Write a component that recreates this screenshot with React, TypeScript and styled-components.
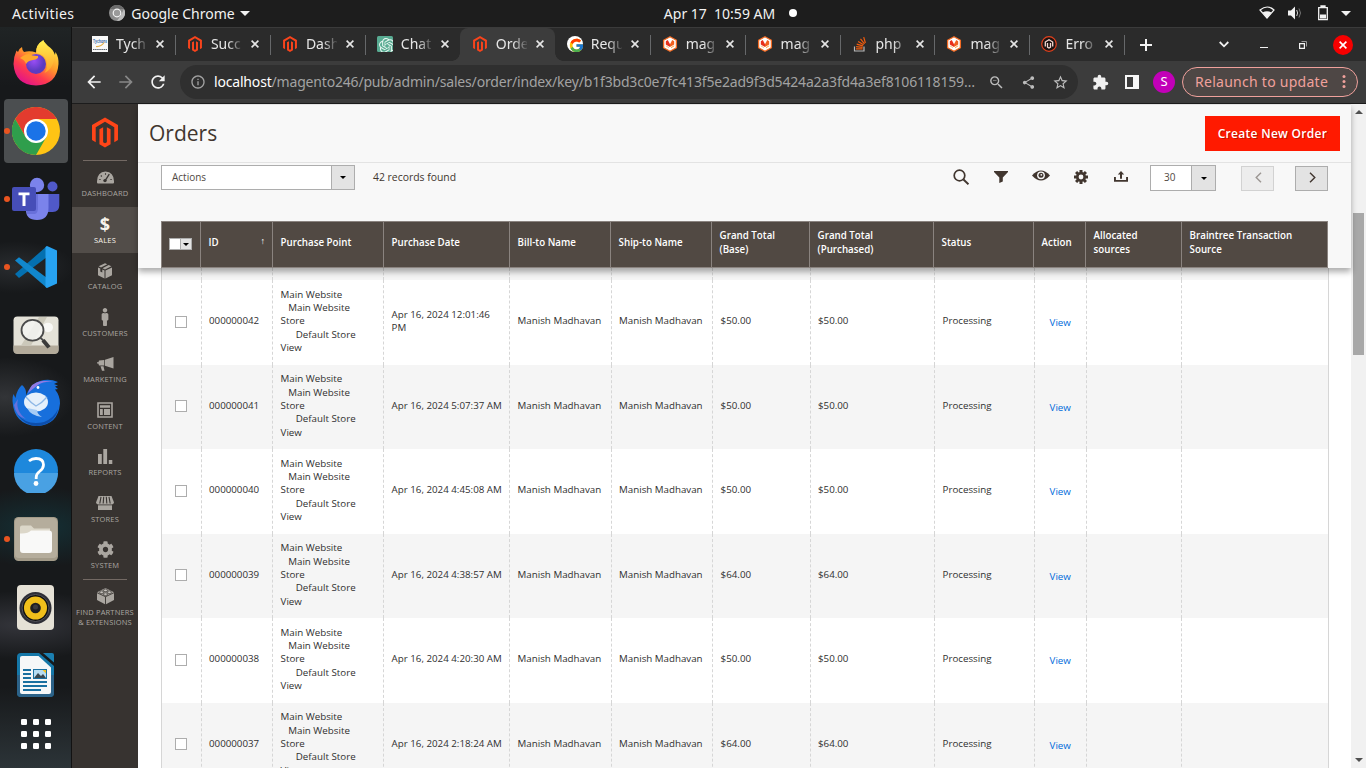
import React from 'react';
import styled, { createGlobalStyle, css } from 'styled-components';
import { FcGoogle } from 'react-icons/fc';
import { SiOpenai } from 'react-icons/si';
import { FaMale, FaCog } from 'react-icons/fa';
import {
  MdArrowBack,
  MdArrowForward,
  MdRefresh,
  MdInfoOutline,
  MdZoomOut,
  MdShare,
  MdStarBorder,
  MdExtension,
} from 'react-icons/md';

const Global = createGlobalStyle`
  * { box-sizing: border-box; }
  html, body { margin: 0; padding: 0; overflow: hidden; }
  svg { display: block; flex: none; }
`;

const uiFont = `"Noto Sans", "Open Sans", sans-serif`;

const Desktop = styled.div`
  width: 1366px;
  height: 768px;
  display: flex;
  flex-direction: column;
  overflow: hidden;
  background: #1d1d1d;
  font-family: ${uiFont};
`;

/* ---------- system bar ---------- */

const SystemBar = styled.header`
  height: 27px;
  flex: none;
  display: grid;
  grid-template-columns: 1fr auto 1fr;
  align-items: center;
  padding: 0 15px 1px 12px;
  background: #1d1d1d;
  color: #f2f2f2;
  font-size: 14px;
  white-space: pre;
`;

const SystemGroup = styled.div<{ $end?: boolean }>`
  display: flex;
  align-items: center;
  justify-content: ${(p) => (p.$end ? 'flex-end' : 'flex-start')};
`;

const SystemText = styled.span<{ $spacing?: number }>`
  letter-spacing: ${(p) => p.$spacing ?? 0}px;
`;

const ChromeMark = styled.span`
  display: flex;
  margin: 0 6px 0 35px;
`;

const Caret = styled.span`
  margin-left: 5px;
  border: 5px solid transparent;
  border-top-color: #f2f2f2;
  border-bottom: 0;
`;

const Clock = styled.div`
  display: flex;
  align-items: center;
  padding-left: 98px;
`;

const NoticeDot = styled.i`
  width: 8px;
  height: 8px;
  border-radius: 50%;
  margin-left: 14px;
  background: #fff;
`;

const Body = styled.div`
  flex: 1;
  display: flex;
  min-height: 0;
`;

/* ---------- dock ---------- */

const Dock = styled.nav`
  width: 72px;
  flex: none;
  display: flex;
  flex-direction: column;
  padding-top: 2px;
  border-right: 1px solid #121212;
  background:
    radial-gradient(ellipse 60px 26px at 15px 240px, rgba(60, 64, 68, 0.5), transparent),
    radial-gradient(ellipse 70px 40px at 5px 370px, rgba(78, 80, 84, 0.5), transparent),
    radial-gradient(ellipse 90px 40px at 40px 500px, rgba(18, 66, 74, 0.55), transparent),
    radial-gradient(ellipse 110px 34px at 20px 598px, rgba(80, 80, 90, 0.5), transparent),
    linear-gradient(#202425 0, #17191b 60px, #17191b 660px, #2c3438 741px);
`;

const DockCell = styled.div<{ $short?: boolean }>`
  height: ${(p) => (p.$short ? 50 : 68)}px;
  flex: none;
  display: flex;
  align-items: center;
  justify-content: center;
  position: relative;
`;

const DockTile = styled.div<{ $active?: boolean }>`
  width: 64px;
  height: 64px;
  border-radius: 4px;
  display: flex;
  align-items: center;
  justify-content: center;
  background: ${(p) => (p.$active ? '#4b4e50' : 'transparent')};
`;

const RunningDot = styled.i`
  position: absolute;
  left: 4px;
  top: 31px;
  width: 6px;
  height: 6px;
  border-radius: 50%;
  background: #e95420;
`;

/* ---------- browser ---------- */

const Browser = styled.section`
  flex: 1;
  min-width: 0;
  display: flex;
  flex-direction: column;
`;

const TabStrip = styled.div`
  height: 34px;
  flex: none;
  display: flex;
  padding-left: 8px;
  background: #2b2b2b;
  border-top: 1px solid #3b3b3b;
  color: #e6e6e6;
`;

const Tab = styled.div<{ $active?: boolean; $divider?: boolean }>`
  position: relative;
  width: 94.95px;
  flex: none;
  display: flex;
  align-items: center;
  padding-left: 12px;
  padding-bottom: 1px;
  ${(p) =>
    p.$divider &&
    css`
      &::after {
        content: '';
        position: absolute;
        right: -1px;
        top: 7px;
        width: 1px;
        height: 20px;
        background: #66686a;
      }
    `}
  ${(p) =>
    p.$active &&
    css`
      background: #3c3c3c;
      border-radius: 8px 8px 0 0;
      &::before,
      &::after {
        content: '';
        position: absolute;
        bottom: 0;
        width: 8px;
        height: 8px;
      }
      &::before {
        left: -8px;
        background: radial-gradient(circle at 0 0, #2b2b2b 7.5px, #3c3c3c 8px);
      }
      &::after {
        right: -8px;
        background: radial-gradient(circle at 100% 0, #2b2b2b 7.5px, #3c3c3c 8px);
      }
    `}
`;

const TabTitle = styled.span`
  width: 31px;
  margin: 0 9px 0 8px;
  white-space: pre;
  font-size: 14px;
  line-height: 20px;
  -webkit-mask-image: linear-gradient(90deg, #000 55%, transparent 105%);
  mask-image: linear-gradient(90deg, #000 55%, transparent 105%);
`;

const WindowControls = styled.div`
  margin-left: auto;
  display: flex;
  align-items: center;
  padding-right: 13px;
`;

const ControlSlot = styled.span<{ $w: number }>`
  width: ${(p) => p.$w}px;
  display: flex;
  align-items: center;
  justify-content: center;
`;

const CloseWindow = styled.span`
  width: 20px;
  height: 20px;
  border-radius: 50%;
  background: #f70000;
  display: flex;
  align-items: center;
  justify-content: center;
  color: #fff;
`;

const AddressBar = styled.div`
  height: 43px;
  flex: none;
  display: flex;
  align-items: center;
  background: #3c3c3c;
  border-bottom: 1px solid #1c1c1c;
  padding: 0 8px 0 12px;
  color: #f1f1f1;
`;

const NavIcon = styled.span<{ $dim?: boolean }>`
  display: flex;
  width: 20px;
  margin-right: 12px;
  color: ${(p) => (p.$dim ? '#888' : '#f1f1f1')};
`;

const Omnibox = styled.div`
  width: 898px;
  flex: none;
  height: 34px;
  border-radius: 17px;
  background: #2f2f2f;
  display: flex;
  align-items: center;
  padding: 0 9px 0 10px;
  color: #a2a2a2;
`;

const Url = styled.span`
  flex: 1;
  margin: 0 0 2px 8px;
  font-size: 14px;
  letter-spacing: -0.18px;
  white-space: nowrap;
  b {
    font-weight: 400;
    color: #fff;
  }
`;

const OmniIcons = styled.span`
  display: flex;
  align-items: center;
  gap: 16px;
  color: #bdbdbd;
`;

const SidePanelMark = styled.svg`
  margin-left: 3px;
`;

const Avatar = styled.span`
  width: 22px;
  height: 22px;
  flex: none;
  border-radius: 50%;
  background: #c200b8;
  color: #fff;
  font-size: 13px;
  line-height: 21px;
  text-align: center;
  margin: 0 7px 0 14px;
`;

const Relaunch = styled.div`
  width: 176px;
  height: 30px;
  flex: none;
  border: 1px solid #f0a19c;
  border-radius: 15px;
  background: #4e4745;
  color: #f0a19c;
  display: flex;
  align-items: center;
  justify-content: space-between;
  padding: 0 11px 1px 12px;
  font-size: 14px;
  letter-spacing: 0.27px;
  white-space: nowrap;
`;

/* ---------- admin page ---------- */

const Viewport = styled.div`
  flex: 1;
  min-height: 0;
  display: flex;
  font-family: 'Open Sans', 'Noto Sans', sans-serif;
  background: #fff;
`;

const SideMenu = styled.aside`
  width: 66px;
  flex: none;
  background: #373330;
  display: flex;
  flex-direction: column;
  align-items: center;
`;

const SideLogo = styled.div`
  padding: 13px 0 12px;
`;

const SideRule = styled.hr`
  width: 44px;
  height: 1px;
  margin: 0 0 -0.6px;
  border: 0;
  background: #736963;
  flex: none;
`;

const SideItem = styled.a<{ $active?: boolean; $h?: number }>`
  width: 66px;
  height: ${(p) => p.$h ?? 46.5}px;
  flex: none;
  display: flex;
  flex-direction: column;
  align-items: center;
  padding-top: 7.6px;
  color: ${(p) => (p.$active ? '#f7f3eb' : '#aaa6a0')};
  background: ${(p) => (p.$active ? '#524d49' : 'transparent')};
`;

const SideIcon = styled.span`
  height: 19px;
  display: flex;
  align-items: center;
  justify-content: center;
`;

const SideLabel = styled.span`
  margin-top: 1px;
  font-size: 7.5px;
  line-height: 10px;
  letter-spacing: 0.17px;
  text-align: center;
  white-space: pre;
`;

const Dollar = styled.b`
  font: 700 18px/18px 'Open Sans', sans-serif;
`;

const Page = styled.main`
  flex: 1;
  min-width: 0;
  display: flex;
  flex-direction: column;
  color: #41362f;
`;

const Sticky = styled.div`
  height: 164px;
  flex: none;
  display: flex;
  flex-direction: column;
  background: #f8f8f8;
  box-shadow: 0 4px 6px rgba(0, 0, 0, 0.32);
  z-index: 1;
`;

const TitleBar = styled.div`
  height: 59px;
  flex: none;
  display: flex;
  align-items: center;
  justify-content: space-between;
  padding: 0 11px;
  border-top: 1px solid #e3e3e3;
  border-bottom: 1px solid #e3e3e3;
`;

const Title = styled.h1`
  margin: 0 0 2px;
  font-size: 21px;
  font-weight: 400;
`;

const PrimaryButton = styled.button`
  width: 135px;
  height: 35px;
  border: 0;
  border-radius: 0;
  padding: 0;
  background: #ff1a00;
  color: #fff;
  font: 600 12px 'Open Sans', sans-serif;
  letter-spacing: 0.3px;
  text-shadow: 1px 1px 0 rgba(0, 0, 0, 0.25);
`;

const Toolbar = styled.div`
  height: 58px;
  flex: none;
  display: flex;
  align-items: flex-start;
  padding: 2px 23px 0;
`;

const Select = styled.div<{ $w: number; $h: number; $pad: number }>`
  width: ${(p) => p.$w}px;
  height: ${(p) => p.$h}px;
  display: flex;
  border: 1px solid #adadad;
  background: #fff;
  color: #514943;
  font-size: 10px;
  line-height: ${(p) => p.$h - 3}px;
  padding-left: ${(p) => p.$pad}px;
`;

const SelectArrow = styled.span<{ $w: number }>`
  width: ${(p) => p.$w}px;
  margin-left: auto;
  border-left: 1px solid #adadad;
  background: #e3e3e3;
  display: flex;
  align-items: center;
  justify-content: center;
`;

const BlackCaret = styled.i`
  border: 3px solid transparent;
  border-top-color: #000;
  border-bottom: 0;
`;

const Records = styled.span`
  margin-left: 18px;
  line-height: 24px;
  font-size: 10.4px;
`;

const ToolIcons = styled.div`
  height: 23px;
  margin-left: auto;
  display: grid;
  grid-template-columns: repeat(5, 40px);
  align-items: center;
  justify-items: center;
  margin-right: 9px;
  color: #41362f;
`;

const PageButton = styled.button<{ $disabled?: boolean; $ml: number }>`
  width: 33px;
  height: 25px;
  margin: 1px 0 0 ${(p) => p.$ml}px;
  padding: 0 0 2px 2px;
  border: 1px solid #adadad;
  background: #e3e3e3;
  opacity: ${(p) => (p.$disabled ? 0.5 : 1)};
  display: flex;
  align-items: center;
  justify-content: center;
`;

const HeadRow = styled.div`
  height: 47px;
  width: 1167px;
  margin-left: 23px;
  flex: none;
  display: grid;
  grid-template-columns: 39px 72px 111px 126px 101px 101px 98px 124px 100px 52px 96px 147px;
  background: #514943;
  border: 1px solid #8a837f;
  border-width: 1px 1px 1px 0;
`;

const HeadCell = styled.div`
  display: flex;
  align-items: center;
  justify-content: space-between;
  border-left: 1px solid #8a837f;
  padding: 0 7px 3px 7.6px;
  color: #fff;
  font-size: 9.75px;
  font-weight: 600;
  line-height: 14px;
  white-space: pre;
  &:first-child {
    padding-left: 7px;
  }
`;

const SortArrow = styled.span`
  font-size: 9px;
  font-weight: 400;
  padding-bottom: 4px;
`;

const MassSelect = styled.span`
  width: 23px;
  height: 12px;
  margin-top: 2px;
  display: flex;
  border: 1px solid #adadad;
  background: #fff;
`;

const MassArrow = styled.span`
  width: 11px;
  margin-left: auto;
  border-left: 1px solid #adadad;
  background: #e3e3e3;
  display: flex;
  align-items: center;
  justify-content: center;
`;

const Rows = styled.div`
  flex: 1;
  min-height: 0;
  overflow: hidden;
  margin-left: 23px;
  width: 1168px;
`;

const Row = styled.div<{ $alt?: boolean; $h?: number }>`
  height: ${(p) => p.$h ?? 84.5}px;
  display: grid;
  grid-template-columns: 40px 71px 111px 126px 102px 101px 98px 124px 100px 52px 95px 148px;
  background: ${(p) => (p.$alt ? '#f5f5f5' : '#fff')};
`;

const Cell = styled.div<{ $link?: boolean; $center?: boolean; $near?: boolean }>`
  display: flex;
  align-items: center;
  justify-content: ${(p) => (p.$center ? 'center' : 'flex-start')};
  padding: ${(p) =>
    p.$link ? '1.2px 0 0 14.6px' : p.$center ? '0 2px 1.2px 0' : `0 7px 2.6px ${p.$near ? 7 : 7.6}px`};
  border-left: 1px dashed #d6d6d6;
  color: ${(p) => (p.$link ? '#006bdb' : '#303030')};
  font-size: 9.75px;
  line-height: 13.3px;
  white-space: pre;
  &:first-child {
    border-left-style: solid;
  }
  &:last-child {
    border-right: 1px solid #d6d6d6;
  }
`;

const Checkbox = styled.span`
  width: 12px;
  height: 12px;
  border: 1px solid #adadad;
  background: #fff;
`;

const ScrollTrack = styled.div`
  width: 15px;
  flex: none;
  display: flex;
  flex-direction: column;
  align-items: center;
  background: #f1f1f1;
  padding: 6px 0 6px;
`;

const ScrollArrow = styled.i<{ $down?: boolean }>`
  border: 4px solid transparent;
  ${(p) =>
    p.$down
      ? 'border-top-color: #505050; border-bottom: 0; margin-top: auto;'
      : 'border-bottom-color: #505050; border-top: 0;'}
`;

const ScrollThumb = styled.div`
  width: 11px;
  height: 142px;
  margin-top: 99px;
  background: #a8a8a8;
`;

/* ---------- drawings ---------- */

const MagentoMark = ({ w, h, color = '#f8441c' }: { w: number; h: number; color?: string }) => (
  <svg width={w} height={h} viewBox="1.6 0 20.8 24" fill={color}>
    <path d="M12 24l-4.455-2.572v-12l2.97-1.715v12.001l1.485.902 1.485-.902V7.713l2.971 1.715v12L12 24zM22.391 6v12l-2.969 1.714V7.713L12 3.43 4.574 7.713v12.001L1.609 18V6L12 0l10.391 6z" />
  </svg>
);

const CrossIcon = () => (
  <svg width="8" height="8" viewBox="0 0 8 8" fill="none" stroke="currentColor" strokeWidth="1.6">
    <path d="M.6.6l6.800 6.800M7.400.6L.6 7.400" />
  </svg>
);

const PlusIcon = () => (
  <svg width="12" height="12" viewBox="0 0 12 12" fill="#f4f4f4">
    <path d="M5 0h2v5h5v2H7v5H5V7H0V5h5z" />
  </svg>
);

const TycheIcon = () => (
  <svg width="16" height="16" viewBox="0 0 16 16">
    <rect width="16" height="16" fill="#f8f8f8" />
    <text x="1" y="6.5" fontSize="6" fontWeight="700" fontFamily="Open Sans, sans-serif" fill="#3f73ad" textLength="14" lengthAdjust="spacingAndGlyphs">Tychons</text>
    <path d="M4 10.500q5 .500 8-4" stroke="#e5b04b" strokeWidth="1.200" fill="none" />
    <path d="M1 13.500h14" stroke="#55606b" strokeWidth="1.200" strokeDasharray="1.500 .600" />
  </svg>
);

const ChatIcon = () => (
  <svg width="16" height="16" viewBox="0 0 16 16">
    <rect width="16" height="16" rx="1.500" fill="#58ab92" />
    <SiOpenai x="2" y="2" width="12" height="12" color="#e8f6f1" />
  </svg>
);

const GoogleIcon = () => (
  <svg width="16" height="16" viewBox="0 0 16 16">
    <circle cx="8" cy="8" r="8" fill="#fff" />
    <FcGoogle x="1.500" y="1.500" width="13" height="13" />
  </svg>
);

const MageplazaIcon = () => (
  <svg width="16" height="16" viewBox="0 0 16 16">
    <path d="M8 .700l6.400 3.500v7.600L8 15.300 1.600 11.800V4.200z" fill="#fff" stroke="#f26a22" strokeWidth="1.300" strokeLinejoin="round" />
    <path d="M3.800 5.200L5.800 4 8 8.300V11L3.800 8.500z" fill="#e8301c" />
    <path d="M12.200 5.200L10.200 4 8 8.300V11l4.200-2.500z" fill="#f2601f" />
    <path d="M9 12.300l3.200-2V9.200L9 11.200z" fill="#f9a13c" />
    <path d="M3.800 9.200v1.100l3.200 2v-1.100z" fill="#fbc27c" />
  </svg>
);

const StackIcon = () => (
  <svg width="16" height="16" viewBox="0 0 16 16" fill="none">
    <path d="M2.500 10.500v4.500h9.500v-4.500" stroke="#b9b9b9" strokeWidth="1.200" />
    <path d="M4 12.800h6.600M4.100 10.600l6.500.700M4.700 8.200l6.200 1.700M6.100 5.500l5.500 3.300M8.500 2.900l4 4.900M11.700 1.200l1.700 5.800" stroke="#f25c0d" strokeWidth="1.200" />
  </svg>
);

const ErrorMageIcon = () => (
  <svg width="16" height="16" viewBox="0 0 16 16">
    <circle cx="8" cy="8" r="7.300" fill="#1c1312" stroke="#e2401c" strokeWidth="1.200" />
    <path d="M4.300 10.600V6L8 3.800 11.700 6v4.600M6.500 7v4.200l1.500.900 1.500-.900V7" stroke="#f3d8d2" strokeWidth="1.300" fill="none" />
  </svg>
);

const FirefoxIcon = () => (
  <svg width="48" height="48" viewBox="0 0 48 48">
    <defs>
      <linearGradient id="ffBody" x1=".8" y1=".1" x2=".25" y2=".95">
        <stop offset="0" stopColor="#ffe544" />
        <stop offset=".4" stopColor="#ff9a2a" />
        <stop offset=".7" stopColor="#ff3c4d" />
        <stop offset="1" stopColor="#e31587" />
      </linearGradient>
      <linearGradient id="ffFlame" x1=".6" y1="0" x2=".6" y2="1">
        <stop offset="0" stopColor="#fff04e" />
        <stop offset="1" stopColor="#ffa12b" />
      </linearGradient>
      <radialGradient id="ffOrb" cx=".4" cy=".35">
        <stop offset="0" stopColor="#9a4df5" />
        <stop offset="1" stopColor="#5b3bc0" />
      </radialGradient>
    </defs>
    <path d="M12 13q-2-2-2-5-3 1.500-4 5l-1.500-1.500Q1.500 18 1.500 25 3 46 24 46.500 45 46 46.500 25q.300-7-3-12l-.500 3Q41 10 36 7L31 1.500Q24 6 24 13.500q-6-2-12-.500z" fill="url(#ffBody)" />
    <path d="M31.500 1Q23 6 24.500 14q8 1 10 8 1.500 7-2 12 8-4 9.500-13 .500-3-.500-7Q39 10 36 7.500q-4-3-4.500-6.500z" fill="url(#ffFlame)" />
    <circle cx="24" cy="25" r="10" fill="url(#ffOrb)" />
    <path d="M8 19q5-4 9-4 4 2.500 9 2 1 3-5 4-5 .500-7 4-1-4-6-6z" fill="#ffa72c" />
  </svg>
);

const ChromeIcon = () => (
  <svg width="48" height="48" viewBox="0 0 48 48">
    <circle cx="24" cy="24" r="24" fill="#ffc414" />
    <path d="M3.200 12A24 24 0 0 1 44.800 12H24L13.600 30z" fill="#e33b2e" />
    <path d="M3.200 12A24 24 0 0 0 24 48L34.400 30 24 36 13.600 30z" fill="#2f9e4c" />
    <circle cx="24" cy="24" r="12" fill="#fff" />
    <circle cx="24" cy="24" r="9.700" fill="#1a73e8" />
  </svg>
);

const TeamsIcon = () => (
  <svg width="48" height="44" viewBox="0 0 48 44">
    <circle cx="40.500" cy="9.500" r="5" fill="#5059c9" />
    <path d="M35 17h12.300v11q0 7-6.500 7H35z" fill="#5059c9" />
    <circle cx="25" cy="8" r="7.200" fill="#7b83eb" />
    <path d="M14 17h22.500v14q0 12-11.500 12T14 32z" fill="#7b83eb" />
    <path d="M14 17h12v14q0 5-3 6h-8z" fill="#5c64cf" opacity=".6" />
    <rect y="10" width="24" height="24" rx="2" fill="#464eb8" />
    <path d="M6.500 15.500h11v2.700h-4V29h-3V18.200h-4z" fill="#fff" />
  </svg>
);

const CodeIcon = () => (
  <svg width="44" height="44" viewBox="0 0 44 44">
    <path d="M1 29l4 4L33 12V1z" fill="#0470b0" />
    <path d="M1 15.500l4-3.300L33 33v10z" fill="#1187cd" />
    <path d="M33 1l10 4.500v33L33 43l-1.500-1V2z" fill="#27a3f2" />
  </svg>
);

const FinderIcon = () => (
  <svg width="46" height="38" viewBox="0 0 46 40" preserveAspectRatio="none">
    <rect x=".5" y=".5" width="45" height="39" rx="4" fill="#e4e2d8" />
    <path d="M.500 31h45v5q0 4-4 4H4.500q-4 0-4-4z" fill="#b3ab9b" />
    <path d="M26 1h8L18 31H8z" fill="#cbc8ba" />
    <circle cx="35" cy="12" r="5" fill="#f8f8f5" />
    <circle cx="19.500" cy="15" r="11" fill="#f4f4f2" fillOpacity=".85" stroke="#4a4a4a" strokeWidth="1.800" />
    <path d="M27.500 23l3 3" stroke="#4a4a4a" strokeWidth="2" />
    <path d="M30 25.500l6 7.500" stroke="#3b3b3b" strokeWidth="4" />
  </svg>
);

const ThunderbirdIcon = () => (
  <svg width="48" height="48" viewBox="0 0 48 48">
    <path d="M10 6q5 4 4 11Q18 5 28 2q9-3 18 1l-4 2 4 1.500-3 1 3 2.500-3 .500q5 6 5 14Q46 46 25 47 2 46 .500 22q0-5 1-7l2 4Q5 10 10 6z" fill="#176fdc" />
    <path d="M16 14q3-11 14-12 7-.500 11 1-9-1-15 3-4 3-10 8z" fill="#8f7ae4" />
    <path d="M6 20q-3 12 8 20-10-2-12-14z" fill="#6672dc" />
    <path d="M5 35q10 12 27 8 10-4 14-13-3 15-21 17Q12 46 5 35z" fill="#0d4eab" />
    <ellipse cx="24" cy="23" rx="12" ry="9.500" fill="#e6f0fb" />
    <path d="M15 29q4 8 15 9-5-3-5-7z" fill="#a7ccf5" />
    <path d="M14 18q5 6 10 9 6-3 11-9" stroke="#8db7e6" strokeWidth="1.300" fill="none" />
    <circle cx="26" cy="8.500" r="1.400" fill="#fff" />
  </svg>
);

const HelpIcon = () => (
  <svg width="44" height="44" viewBox="0 0 44 44">
    <circle cx="22" cy="22" r="22" fill="#1e88dc" />
    <path d="M0 24a22 22 0 0 0 44 0z" fill="#49a1e3" />
    <path d="M15 12q3-2.500 7-2.500 7.500 0 7.500 6.300 0 3.700-4 6.700-3.300 2.500-3.300 6V30" stroke="#fff" strokeWidth="2.800" fill="none" />
    <circle cx="22" cy="34.500" r="2.400" fill="#fff" />
  </svg>
);

const FilesIcon = () => (
  <svg width="44" height="44" viewBox="0 0 44 44">
    <rect width="44" height="44" rx="4.500" fill="#a39b89" />
    <rect x="1" y="1" width="42" height="40" rx="4" fill="#b5ad9c" />
    <path d="M8 8.500h9l3 3h16V17H6v-6.500q0-2 2-2z" fill="#dcd7c9" />
    <path d="M6 16.500q8 .500 11-3h18q3 0 3 3V33q0 3-3 3H9q-3 0-3-3z" fill="#f9f9f8" />
  </svg>
);

const RhythmIcon = () => (
  <svg width="37" height="45" viewBox="0 0 37 45">
    <rect width="37" height="45" rx="4" fill="#e5e1d6" />
    <circle cx="18.500" cy="23" r="16" fill="#2e2e36" />
    <circle cx="18.500" cy="23" r="13.500" fill="#111" stroke="#54545c" />
    <circle cx="18.500" cy="23" r="11.500" fill="#f1bf1b" />
    <circle cx="18.500" cy="23" r="5.300" fill="#1f1f22" />
    <circle cx="18.500" cy="22" r="2.500" fill="#3b3b3f" />
  </svg>
);

const WriterIcon = () => (
  <svg width="37" height="44" viewBox="0 0 37 44">
    <path d="M4 0h18l15 13v27q0 4-4 4H4q-4 0-4-4V4q0-4 4-4z" fill="#1577a8" />
    <path d="M0 22h37v18q0 4-4 4H4q-4 0-4-4z" fill="#2c6288" />
    <path d="M5 3h16.500L34 14.500V39q0 2-2 2H5q-2 0-2-2V5q0-2 2-2z" fill="#f6f7f8" />
    <path d="M26 0h9q2 0 2 2v7.500z" fill="#1b7fb0" />
    <path d="M6 17h8M6 21h8M6 25h8M6 29h24M6 33h24M6 37h18" stroke="#1a6fa0" strokeWidth="2" />
    <rect x="16" y="16" width="14" height="10" fill="#1a6fa0" />
    <rect x="17" y="17" width="12" height="8" fill="#b7dcf2" />
    <path d="M17 25l4-5 3 3 2-2 3 4z" fill="#39474f" />
    <path d="M25.500 17H29v3.500z" fill="#f3c221" />
  </svg>
);

const AppsIcon = () => (
  <svg width="30" height="30" viewBox="0 0 30 30" fill="#fff">
    {[0, 12, 24].map((y) => [0, 12, 24].map((x) => <rect key={`${x}-${y}`} x={x} y={y} width="6" height="6" rx="1.300" />))}
  </svg>
);

const GaugeIcon = () => (
  <svg width="17" height="13" viewBox="0 0 17 13">
    <path d="M0 11.500Q-.300 1 8.500.500 17.300 1 17 11.500q0 1-1 1H1q-1 0-1-1z" fill="currentColor" />
    <path d="M2.300 8.500h1.300M3.800 4.500l1 1M8.500 2.300v1.400M14.700 8.500h-1.300" stroke="#373330" strokeWidth="1.100" />
    <path d="M12.300 3.200L8 9.800" stroke="#373330" strokeWidth="1.300" />
    <circle cx="8" cy="9.600" r="1.700" fill="#373330" />
  </svg>
);

const BoxIcon = () => (
  <svg width="14" height="16" viewBox="0 0 14 16" fill="currentColor">
    <path d="M7 .300l2.300 1L3 4.400.600 3.300zM10.600 1.900l2.800 1.400L7 6.400 4.500 5.200zM0 4.500l2.300 1.100v3l2 .900V6.500l2.200 1v8L0 12.300zM14 4.500v7.800l-6.500 3.200v-8z" />
  </svg>
);

const MegaphoneIcon = () => (
  <svg width="17" height="14" viewBox="0 0 17 14" fill="currentColor">
    <path d="M16.500 0v11.500L8 8.800V2.800zM7.300 3v5.600H2Q.500 5.800 2 3.500zM3.500 9.300h3l1 4.400H5z" />
    <path d="M0 5.200h2v1.300H0z" />
  </svg>
);

const LayoutIcon = () => (
  <svg width="16" height="16" viewBox="0 0 16 16">
    <path d="M1 1h14v14H1z" stroke="currentColor" strokeWidth="1.600" fill="none" />
    <path d="M3 3.200h10v2.600H3zM3 7h2.800v6H3zM7 7h6v6H7z" fill="currentColor" />
  </svg>
);

const BarsIcon = () => (
  <svg width="15" height="15" viewBox="0 0 15 15" fill="currentColor">
    <path d="M0 5h3.800v10H0zM5.300 0h3.800v15H5.300zM10.800 11h3.500v4h-3.500z" />
  </svg>
);

const StoreIcon = () => (
  <svg width="18" height="14" viewBox="0 0 18 14">
    <path d="M2.500 0h13L18 6.500q-.500 2-2.300 2H2.300Q.500 8.500 0 6.500z" fill="currentColor" />
    <path d="M5 .800L3.800 7.500M7.700.800L7.200 7.500M10.300.800l.500 6.700M13 .800l1.200 6.700" stroke="#373330" strokeWidth="1.100" />
    <path d="M2 9.300h14V14H2z" fill="currentColor" />
  </svg>
);

const BlockIcon = () => (
  <svg width="17" height="17" viewBox="0 0 17 17">
    <path d="M8.500 0L17 4.300V12L8.500 16.500 0 12V4.300z" fill="currentColor" />
    <path d="M0 4.700l8.500 4 8.500-4M8.500 8.700V17" stroke="#373330" strokeWidth=".9" fill="none" />
    <g fill="#c8c4be" stroke="#373330" strokeWidth=".7">
      <ellipse cx="8.500" cy="2.300" rx="2.100" ry="1.300" />
      <ellipse cx="4.600" cy="4.200" rx="2.100" ry="1.300" />
      <ellipse cx="12.400" cy="4.200" rx="2.100" ry="1.300" />
      <ellipse cx="8.500" cy="6.100" rx="2.100" ry="1.300" />
    </g>
  </svg>
);

const LensIcon = () => (
  <svg width="16" height="16" viewBox="0 0 16 16" fill="none" stroke="currentColor">
    <circle cx="6.500" cy="6.500" r="5.300" strokeWidth="1.700" />
    <path d="M10.500 10.500l5 4.800" strokeWidth="2" />
  </svg>
);

const FunnelIcon = () => (
  <svg width="14" height="12" viewBox="0 0 14 12" fill="currentColor">
    <path d="M0 0h14v1L8.800 6.500v4L5.300 12V6.500L0 1z" />
  </svg>
);

const EyeSvg = styled.svg`
  margin-bottom: 2px;
`;

const EyeIcon = () => (
  <EyeSvg width="18" height="11" viewBox="0 0 18 11">
    <path d="M0 5.500Q9-4.500 18 5.500 9 15.500 0 5.500z" fill="currentColor" />
    <circle cx="9" cy="5.300" r="3.900" fill="#f8f8f8" />
    <circle cx="9" cy="5.300" r="2.500" fill="currentColor" />
    <circle cx="9.300" cy="4.800" r=".9" fill="#f8f8f8" />
  </EyeSvg>
);

const GearIcon = () => (
  <svg width="14" height="14" viewBox="-7 -7 14 14">
    <g fill="currentColor">
      {[0, 45, 90, 135].map((a) => (
        <rect key={a} x="-1.500" y="-7" width="3" height="14" transform={`rotate(${a})`} />
      ))}
      <circle r="5" />
    </g>
    <circle r="2.400" fill="#f8f8f8" />
  </svg>
);

const ExportIcon = () => (
  <svg width="14" height="11" viewBox="0 0 14 11" fill="currentColor">
    <path d="M7 0l3.200 3.600H8v4.200H6V3.600H3.800zM0 6h1.900v3h10.200V6H14v4.800H0z" />
  </svg>
);

const Chevron = ({ dir }: { dir: 'left' | 'right' }) => (
  <svg width="7" height="11" viewBox="0 0 7 11" fill="none" stroke="#41362f" strokeWidth="1.400">
    <path d={dir === 'left' ? 'M6 .700L1.200 5.500 6 10.300' : 'M1 .700l4.800 4.800L1 10.300'} />
  </svg>
);

/* ---------- data ---------- */

const tabs = [
  { title: 'Tych', icon: <TycheIcon />, divider: true },
  { title: 'Succ', icon: <MagentoMark w={14} h={16} />, divider: true },
  { title: 'Dash', icon: <MagentoMark w={14} h={16} />, divider: true },
  { title: 'Chat', icon: <ChatIcon /> },
  { title: 'Orde', icon: <MagentoMark w={14} h={16} />, active: true },
  { title: 'Requ', icon: <GoogleIcon />, divider: true },
  { title: 'mag', icon: <MageplazaIcon />, divider: true },
  { title: 'mag', icon: <MageplazaIcon />, divider: true },
  { title: 'php', icon: <StackIcon />, divider: true },
  { title: 'mag', icon: <MageplazaIcon />, divider: true },
  { title: 'Erro', icon: <ErrorMageIcon />, divider: true },
];

const TabIcon = styled.span`
  width: 16px;
  display: flex;
  justify-content: center;
  flex: none;
`;

const dock = [
  { icon: <FirefoxIcon /> },
  { icon: <ChromeIcon />, running: true, active: true },
  { icon: <TeamsIcon />, running: true },
  { icon: <CodeIcon />, running: true },
  { icon: <FinderIcon /> },
  { icon: <ThunderbirdIcon /> },
  { icon: <HelpIcon /> },
  { icon: <FilesIcon />, running: true },
  { icon: <RhythmIcon /> },
  { icon: <WriterIcon /> },
];

const menu = [
  { label: 'DASHBOARD', icon: <GaugeIcon /> },
  { label: 'SALES', icon: <Dollar>$</Dollar>, active: true },
  { label: 'CATALOG', icon: <BoxIcon /> },
  { label: 'CUSTOMERS', icon: <FaMale size={18} /> },
  { label: 'MARKETING', icon: <MegaphoneIcon /> },
  { label: 'CONTENT', icon: <LayoutIcon /> },
  { label: 'REPORTS', icon: <BarsIcon /> },
  { label: 'STORES', icon: <StoreIcon /> },
  { label: 'SYSTEM', icon: <FaCog size={17} /> },
];

const heads = [
  'Purchase Point',
  'Purchase Date',
  'Bill-to Name',
  'Ship-to Name',
  'Grand Total\n(Base)',
  'Grand Total\n(Purchased)',
  'Status',
  'Action',
  'Allocated\nsources',
  'Braintree Transaction\nSource',
];

const orders = [
  { id: '000000042', date: 'Apr 16, 2024 12:01:46\nPM', total: '$50.00' },
  { id: '000000041', date: 'Apr 16, 2024 5:07:37 AM', total: '$50.00' },
  { id: '000000040', date: 'Apr 16, 2024 4:45:08 AM', total: '$50.00' },
  { id: '000000039', date: 'Apr 16, 2024 4:38:57 AM', total: '$64.00' },
  { id: '000000038', date: 'Apr 16, 2024 4:20:30 AM', total: '$50.00' },
  { id: '000000037', date: 'Apr 16, 2024 2:18:24 AM', total: '$64.00' },
];

const storePath = 'Main Website\n   Main Website\nStore\n      Default Store\nView';
const customer = 'Manish Madhavan';

export default function App() {
  return (
    <Desktop>
      <Global />
      <SystemBar>
        <SystemGroup>
          <SystemText $spacing={0.4}>Activities</SystemText>
          <ChromeMark>
            <svg width="16" height="16" viewBox="0 0 16 16">
              <circle cx="8" cy="8" r="8" fill="#8e8e8e" />
              <path d="M1 4a8 8 0 0 1 14 0H8z" fill="#6c6c6c" />
              <path d="M15 4a8 8 0 0 1-7 12l4-6z" fill="#bdbdbd" />
              <circle cx="8" cy="8" r="3.800" fill="#9a9a9a" stroke="#f5f5f5" strokeWidth="1.200" />
            </svg>
          </ChromeMark>
          <SystemText>Google Chrome</SystemText>
          <Caret />
        </SystemGroup>
        <Clock>
          <SystemText>{'Apr 17  10:59 AM'}</SystemText>
          <NoticeDot />
        </Clock>
        <SystemGroup $end>
          <svg width="92" height="16" viewBox="0 0 92 16">
            <path d="M1 5q7.500-6 14 0L8 13z" fill="none" stroke="#f2f2f2" strokeWidth="1.200" />
            <path d="M3.500 7.500q4.500-2.500 9 0L8 13z" fill="#f2f2f2" />
            <path d="M29 5.500h3l4-4v13l-4-4h-3z" fill="#f2f2f2" />
            <path d="M37.700 5q1.800 3 0 6" stroke="#d0d0d0" fill="none" />
            <path d="M40 3.500q3 4.500 0 9" stroke="#777" fill="none" />
            <path d="M59.700 2.700h8.600v12h-8.600zM62 1h4v1.500h-4z" fill="none" stroke="#f2f2f2" strokeWidth="1.300" />
            <path d="M61 9.500h6v4h-6z" fill="#f2f2f2" />
            <path d="M82 6h10l-5 5z" fill="#f2f2f2" />
          </svg>
        </SystemGroup>
      </SystemBar>
      <Body>
        <Dock>
          {dock.map((d, i) => (
            <DockCell key={i}>
              <DockTile $active={d.active}>{d.icon}</DockTile>
              {d.running && <RunningDot />}
            </DockCell>
          ))}
          <DockCell $short>
            <AppsIcon />
          </DockCell>
        </Dock>
        <Browser>
          <TabStrip>
            {tabs.map((t, i) => (
              <Tab key={i} $active={t.active} $divider={t.divider}>
                <TabIcon>{t.icon}</TabIcon>
                <TabTitle>{t.title}</TabTitle>
                <CrossIcon />
              </Tab>
            ))}
            <ControlSlot $w={43}>
              <PlusIcon />
            </ControlSlot>
            <WindowControls>
              <ControlSlot $w={40}>
                <svg width="10" height="7" viewBox="0 0 10 7" fill="none" stroke="#f1f1f1" strokeWidth="1.800">
                  <path d="M.700 1L5 5.300 9.300 1" />
                </svg>
              </ControlSlot>
              <ControlSlot $w={39}>
                <svg width="8" height="6" viewBox="0 0 8 6">
                  <path d="M0 5h8v1H0z" fill="#f1f1f1" />
                </svg>
              </ControlSlot>
              <ControlSlot $w={40}>
                <svg width="8" height="8" viewBox="0 0 8 8" fill="none">
                  <path d="M2.500.500h5v5" stroke="#9a9a9a" />
                  <path d="M.600 2.600h4.800v4.800H.600z" stroke="#f1f1f1" strokeWidth="1.200" />
                </svg>
              </ControlSlot>
              <ControlSlot $w={10} />
              <CloseWindow>
                <CrossIcon />
              </CloseWindow>
            </WindowControls>
          </TabStrip>
          <AddressBar>
            <NavIcon>
              <MdArrowBack size={20} />
            </NavIcon>
            <NavIcon $dim>
              <MdArrowForward size={20} />
            </NavIcon>
            <NavIcon>
              <MdRefresh size={20} />
            </NavIcon>
            <Omnibox>
              <MdInfoOutline size={16} />
              <Url>
                <b>localhost</b>/magento246/pub/admin/sales/order/index/key/b1f3bd3c0e7fc413f5e2ad9f3d5424a2a3fd4a3ef8106118159…
              </Url>
              <OmniIcons>
                <MdZoomOut size={17} />
                <MdShare size={15} />
                <MdStarBorder size={17} />
              </OmniIcons>
            </Omnibox>
            <ControlSlot $w={44}>
              <MdExtension size={17} />
            </ControlSlot>
            <SidePanelMark width="14" height="14" viewBox="0 0 14 14">
              <path d="M0 0h14v14H0zM2 2v10h6V2z" fill="#f7f7f7" fillRule="evenodd" />
            </SidePanelMark>
            <Avatar>S</Avatar>
            <Relaunch>
              Relaunch to update
              <svg width="4" height="13" viewBox="0 0 4 13" fill="#f0a19c">
                <circle cx="2" cy="1.500" r="1.500" />
                <circle cx="2" cy="6.500" r="1.500" />
                <circle cx="2" cy="11.500" r="1.500" />
              </svg>
            </Relaunch>
          </AddressBar>
          <Viewport>
            <SideMenu>
              <SideLogo>
                <MagentoMark w={26} h={31} color="#ff4518" />
              </SideLogo>
              <SideRule />
              {menu.map((m) => (
                <SideItem key={m.label} $active={m.active}>
                  <SideIcon>{m.icon}</SideIcon>
                  <SideLabel>{m.label}</SideLabel>
                </SideItem>
              ))}
              <SideRule />
              <SideItem $h={60}>
                <SideIcon>
                  <BlockIcon />
                </SideIcon>
                <SideLabel>{'FIND PARTNERS\n& EXTENSIONS'}</SideLabel>
              </SideItem>
            </SideMenu>
            <Page>
              <Sticky>
                <TitleBar>
                  <Title>Orders</Title>
                  <PrimaryButton>Create New Order</PrimaryButton>
                </TitleBar>
                <Toolbar>
                  <Select $w={194} $h={25} $pad={10}>
                    Actions
                    <SelectArrow $w={23}>
                      <BlackCaret />
                    </SelectArrow>
                  </Select>
                  <Records>42 records found</Records>
                  <ToolIcons>
                    <LensIcon />
                    <FunnelIcon />
                    <EyeIcon />
                    <GearIcon />
                    <ExportIcon />
                  </ToolIcons>
                  <Select $w={66} $h={26} $pad={13}>
                    30
                    <SelectArrow $w={24}>
                      <BlackCaret />
                    </SelectArrow>
                  </Select>
                  <PageButton $disabled $ml={25}>
                    <Chevron dir="left" />
                  </PageButton>
                  <PageButton $ml={21}>
                    <Chevron dir="right" />
                  </PageButton>
                </Toolbar>
                <HeadRow>
                  <HeadCell>
                    <MassSelect>
                      <MassArrow>
                        <BlackCaret />
                      </MassArrow>
                    </MassSelect>
                  </HeadCell>
                  <HeadCell>
                    ID<SortArrow>↑</SortArrow>
                  </HeadCell>
                  {heads.map((h) => (
                    <HeadCell key={h}>{h}</HeadCell>
                  ))}
                </HeadRow>
              </Sticky>
              <Rows>
                <Row $alt $h={12.2}>
                  {Array.from({ length: 12 }, (_, i) => (
                    <Cell key={i} />
                  ))}
                </Row>
                {orders.map((o, i) => (
                  <Row key={o.id} $alt={i % 2 === 1}>
                    <Cell $center>
                      <Checkbox />
                    </Cell>
                    <Cell $near>{o.id}</Cell>
                    <Cell>{storePath}</Cell>
                    <Cell>{o.date}</Cell>
                    <Cell>{customer}</Cell>
                    <Cell $near>{customer}</Cell>
                    <Cell>{o.total}</Cell>
                    <Cell $near>{o.total}</Cell>
                    <Cell>Processing</Cell>
                    <Cell $link>View</Cell>
                    <Cell />
                    <Cell />
                  </Row>
                ))}
              </Rows>
            </Page>
            <ScrollTrack>
              <ScrollArrow />
              <ScrollThumb />
              <ScrollArrow $down />
            </ScrollTrack>
          </Viewport>
        </Browser>
      </Body>
    </Desktop>
  );
}
